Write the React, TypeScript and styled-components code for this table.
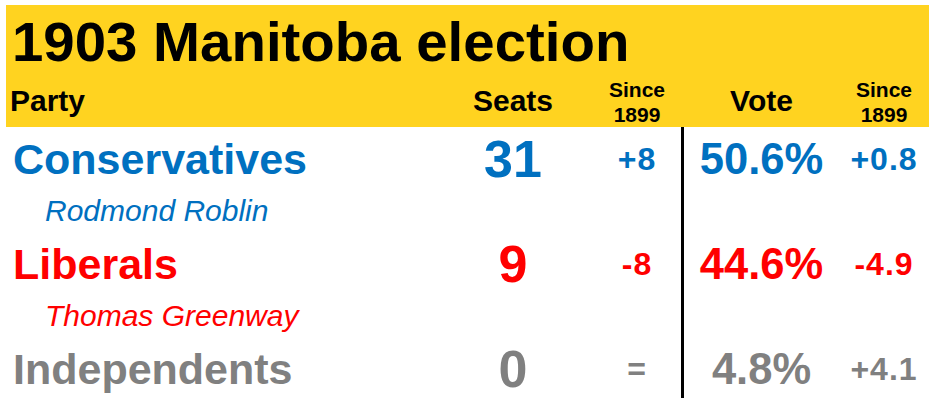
import { createGlobalStyle, styled } from 'styled-components';

interface ColorProps {
    $color: string;
}

interface ColProps {
    $col: number;
}

const COLUMNS = '427px 160px 88px 3px 155px 90px';

const parties = [
    { name: 'Conservatives', leader: 'Rodmond Roblin', color: '#0070c0', seats: '31', seatDiff: '+8', vote: '50.6%', voteDiff: '+0.8' },
    { name: 'Liberals', leader: 'Thomas Greenway', color: '#ff0000', seats: '9', seatDiff: '-8', vote: '44.6%', voteDiff: '-4.9' },
    { name: 'Independents', leader: '', color: '#808080', seats: '0', seatDiff: '=', vote: '4.8%', voteDiff: '+4.1' },
];

const App = () => {
    return (
        <Page>
            <GlobalStyle />
            <Banner>
                <Title>1903 Manitoba election</Title>
                <HeaderRow>
                    <Label $col={1} style={{ justifySelf: 'start', paddingLeft: 4 }}>
                        Party
                    </Label>
                    <Label $col={2}>Seats</Label>
                    <Since $col={3}>
                        Since
                        <br />
                        1899
                    </Since>
                    <Label $col={5}>Vote</Label>
                    <Since $col={6}>
                        Since
                        <br />
                        1899
                    </Since>
                </HeaderRow>
            </Banner>
            <Body>
                <Divider />
                {parties.map((p) => [
                    <PartyName key={p.name + 'n'} $color={p.color}>
                        {p.name}
                    </PartyName>,
                    <SeatNum key={p.name + 's'} $color={p.color}>
                        {p.seats}
                    </SeatNum>,
                    <Change key={p.name + 'sd'} $color={p.color} $col={3}>
                        {p.seatDiff}
                    </Change>,
                    <VoteNum key={p.name + 'v'} $color={p.color}>
                        {p.vote}
                    </VoteNum>,
                    <Change key={p.name + 'vd'} $color={p.color} $col={6}>
                        {p.voteDiff}
                    </Change>,
                    p.leader ? (
                        <Leader key={p.name + 'l'} $color={p.color}>
                            {p.leader}
                        </Leader>
                    ) : null,
                ])}
            </Body>
        </Page>
    );
};

export default App;

const GlobalStyle = createGlobalStyle`
    html, body {
        margin: 0;
        padding: 0;
        background: #ffffff;
    }
    body {
        font-family: 'Liberation Sans', Arial, sans-serif;
    }
`;

const Page = styled.div`
    width: 934px;
    height: 405px;
    box-sizing: border-box;
    padding: 5px 5px 0 6px;
    overflow: hidden;
`;

const Banner = styled.div`
    background: #ffd320;
    color: #000000;
`;

const Title = styled.div`
    font-size: 56.4px;
    font-weight: 700;
    line-height: 71px;
    padding: 1px 0 0 6px;
    white-space: nowrap;
`;

const HeaderRow = styled.div`
    display: grid;
    grid-template-columns: ${COLUMNS};
    align-items: end;
`;

const Label = styled.div<ColProps>`
    grid-column: ${(props) => props.$col};
    justify-self: center;
    font-size: 30px;
    font-weight: 700;
    margin-bottom: 9px;
    white-space: nowrap;
`;

const Since = styled.div<ColProps>`
    grid-column: ${(props) => props.$col};
    justify-self: center;
    text-align: center;
    font-size: 21px;
    font-weight: 700;
    line-height: 25px;
`;

const Body = styled.div`
    display: grid;
    grid-template-columns: ${COLUMNS};
    grid-template-rows: 58px 47px 58px 47px 58px 3px;
`;

const Divider = styled.div`
    grid-column: 4;
    grid-row: 1 / -1;
    background: #000000;
`;

const Cell = styled.div<ColorProps>`
    display: flex;
    align-items: center;
    justify-content: center;
    box-sizing: border-box;
    padding-top: 6px;
    color: ${(props) => props.$color};
    font-weight: 700;
    white-space: nowrap;
`;

const PartyName = styled(Cell)`
    grid-column: 1;
    justify-content: flex-start;
    padding-left: 7px;
    font-size: 43px;
`;

const SeatNum = styled(Cell)`
    grid-column: 2;
    font-size: 52px;
`;

const Change = styled(Cell)<ColProps>`
    grid-column: ${(props) => props.$col};
    font-size: 32px;
    letter-spacing: 1px;
`;

const VoteNum = styled(Cell)`
    grid-column: 5;
    font-size: 43.5px;
`;

const Leader = styled.div<ColorProps>`
    grid-column: 1 / 4;
    display: flex;
    align-items: center;
    box-sizing: border-box;
    padding: 4px 0 0 39px;
    color: ${(props) => props.$color};
    font-size: 30px;
    font-style: italic;
    white-space: nowrap;
`;
